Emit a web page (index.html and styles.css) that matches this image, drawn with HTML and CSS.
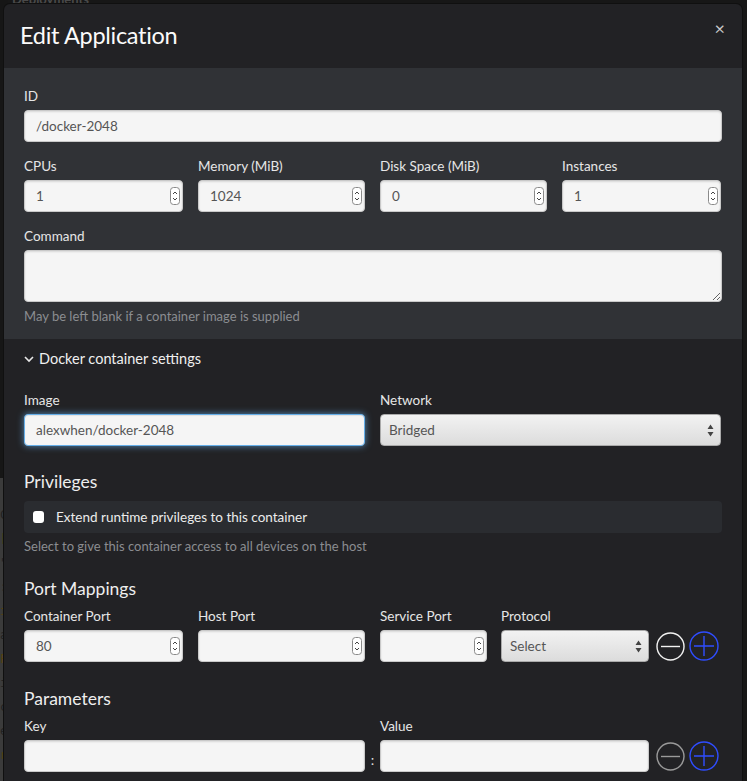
FILE: index.html
```html
<!DOCTYPE html>
<html>
<head>
<meta charset="utf-8">
<title>Edit Application</title>
<link rel="stylesheet" href="styles.css">
</head>
<body>
<div class="page">
  <div class="page-top">Deployments</div>
  <div class="page-side">
    <div class="side-dark"></div>
    <div class="side-light">
      <span class="g1">C</span><span class="g2">[</span><span class="g1">"</span><span class="g1">:</span><span class="g2">i</span><span class="g1">a</span><span class="g2">F</span><span class="g1">i</span><span class="g1">c</span><span class="g1">e</span><span class="g2">r</span>
    </div>
  </div>
</div>

<div class="modal">
  <div class="modal-header">
    <h1 class="modal-title">Edit Application</h1>
    <span class="close">×</span>
  </div>

  <div class="section-main">
    <div class="group">
      <label class="lbl">ID</label>
      <div class="ctl"><span class="val">/docker-2048</span></div>
    </div>

    <div class="row4">
      <div class="group">
        <label class="lbl">CPUs</label>
        <div class="ctl num"><span class="val">1</span><span class="spin"><svg width="10" height="18" viewBox="0 0 10 18"><rect x="0.5" y="0.5" width="9" height="17" rx="3" fill="#fff" stroke="#8a8a8a"/><path d="M3 7 L5 5 L7 7" fill="none" stroke="#444" stroke-width="1"/><path d="M3 11 L5 13 L7 11" fill="none" stroke="#444" stroke-width="1"/></svg></span></div>
      </div>
      <div class="group">
        <label class="lbl">Memory (MiB)</label>
        <div class="ctl num"><span class="val">1024</span><span class="spin"><svg width="10" height="18" viewBox="0 0 10 18"><rect x="0.5" y="0.5" width="9" height="17" rx="3" fill="#fff" stroke="#8a8a8a"/><path d="M3 7 L5 5 L7 7" fill="none" stroke="#444" stroke-width="1"/><path d="M3 11 L5 13 L7 11" fill="none" stroke="#444" stroke-width="1"/></svg></span></div>
      </div>
      <div class="group">
        <label class="lbl">Disk Space (MiB)</label>
        <div class="ctl num"><span class="val">0</span><span class="spin"><svg width="10" height="18" viewBox="0 0 10 18"><rect x="0.5" y="0.5" width="9" height="17" rx="3" fill="#fff" stroke="#8a8a8a"/><path d="M3 7 L5 5 L7 7" fill="none" stroke="#444" stroke-width="1"/><path d="M3 11 L5 13 L7 11" fill="none" stroke="#444" stroke-width="1"/></svg></span></div>
      </div>
      <div class="group">
        <label class="lbl">Instances</label>
        <div class="ctl num"><span class="val">1</span><span class="spin"><svg width="10" height="18" viewBox="0 0 10 18"><rect x="0.5" y="0.5" width="9" height="17" rx="3" fill="#fff" stroke="#8a8a8a"/><path d="M3 7 L5 5 L7 7" fill="none" stroke="#444" stroke-width="1"/><path d="M3 11 L5 13 L7 11" fill="none" stroke="#444" stroke-width="1"/></svg></span></div>
      </div>
    </div>

    <div class="group last">
      <label class="lbl">Command</label>
      <textarea class="ctl area"></textarea>
      <p class="help">May be left blank if a container image is supplied</p>
    </div>
  </div>

  <div class="collapse-head">
    <svg class="chev" width="10" height="8" viewBox="0 0 10 8"><path d="M1 2 L5 6 L9 2" fill="none" stroke="#e8e8e8" stroke-width="1.6"/></svg>
    <span>Docker container settings</span>
  </div>

  <div class="section-docker">
    <div class="row2">
      <div class="group">
        <label class="lbl">Image</label>
        <div class="ctl focus"><span class="val">alexwhen/docker-2048</span></div>
      </div>
      <div class="group">
        <label class="lbl">Network</label>
        <div class="ctl sel"><span class="val">Bridged</span><svg class="arrows" width="7" height="13" viewBox="0 0 7 13"><path d="M3.5 0.5 L6.5 5 H0.5 Z M3.5 12.5 L6.5 8 H0.5 Z" fill="#444"/></svg></div>
      </div>
    </div>

    <h3 class="sub">Privileges</h3>
    <div class="checkbox-box">
      <span class="cb"></span>
      <span class="cb-text">Extend runtime privileges to this container</span>
    </div>
    <p class="help help-priv">Select to give this container access to all devices on the host</p>

    <h3 class="sub sub-ports">Port Mappings</h3>
    <div class="row-ports">
      <div class="group w159">
        <label class="lbl">Container Port</label>
        <div class="ctl num"><span class="val">80</span><span class="spin"><svg width="10" height="18" viewBox="0 0 10 18"><rect x="0.5" y="0.5" width="9" height="17" rx="3" fill="#fff" stroke="#8a8a8a"/><path d="M3 7 L5 5 L7 7" fill="none" stroke="#444" stroke-width="1"/><path d="M3 11 L5 13 L7 11" fill="none" stroke="#444" stroke-width="1"/></svg></span></div>
      </div>
      <div class="group w167">
        <label class="lbl">Host Port</label>
        <div class="ctl num"><span class="val"></span><span class="spin"><svg width="10" height="18" viewBox="0 0 10 18"><rect x="0.5" y="0.5" width="9" height="17" rx="3" fill="#fff" stroke="#8a8a8a"/><path d="M3 7 L5 5 L7 7" fill="none" stroke="#444" stroke-width="1"/><path d="M3 11 L5 13 L7 11" fill="none" stroke="#444" stroke-width="1"/></svg></span></div>
      </div>
      <div class="group w107">
        <label class="lbl">Service Port</label>
        <div class="ctl num"><span class="val"></span><span class="spin"><svg width="10" height="18" viewBox="0 0 10 18"><rect x="0.5" y="0.5" width="9" height="17" rx="3" fill="#fff" stroke="#8a8a8a"/><path d="M3 7 L5 5 L7 7" fill="none" stroke="#444" stroke-width="1"/><path d="M3 11 L5 13 L7 11" fill="none" stroke="#444" stroke-width="1"/></svg></span></div>
      </div>
      <div class="group w148">
        <label class="lbl">Protocol</label>
        <div class="ctl sel"><span class="val">Select</span><svg class="arrows" width="7" height="13" viewBox="0 0 7 13"><path d="M3.5 0.5 L6.5 5 H0.5 Z M3.5 12.5 L6.5 8 H0.5 Z" fill="#444"/></svg></div>
      </div>
      <div class="btns">
        <svg width="29" height="29" viewBox="0 0 29 29"><circle cx="14.5" cy="14.5" r="13.5" fill="none" stroke="#f2f2f2" stroke-width="1.4"/><path d="M5 14.5 H24" stroke="#f2f2f2" stroke-width="1.4"/></svg>
        <svg width="30" height="30" viewBox="0 0 30 30"><circle cx="15" cy="15" r="14" fill="none" stroke="#2f4dff" stroke-width="1.4"/><path d="M5 15 H25 M15 5 V25" stroke="#2f4dff" stroke-width="1.4"/></svg>
      </div>
    </div>

    <h3 class="sub sub-params">Parameters</h3>
    <div class="row-params">
      <div class="group w341">
        <label class="lbl">Key</label>
        <div class="ctl"><span class="val"></span></div>
      </div>
      <span class="colon">:</span>
      <div class="group w269">
        <label class="lbl">Value</label>
        <div class="ctl"><span class="val"></span></div>
      </div>
      <div class="btns">
        <svg width="29" height="29" viewBox="0 0 29 29"><circle cx="14.5" cy="14.5" r="13.5" fill="none" stroke="#9a9a9a" stroke-width="1.4"/><path d="M5 14.5 H24" stroke="#9a9a9a" stroke-width="1.4"/></svg>
        <svg width="30" height="30" viewBox="0 0 30 30"><circle cx="15" cy="15" r="14" fill="none" stroke="#2f4dff" stroke-width="1.4"/><path d="M5 15 H25 M15 5 V25" stroke="#2f4dff" stroke-width="1.4"/></svg>
      </div>
    </div>
  </div>
</div>
</body>
</html>
```

FILE: styles.css
```css
html, body {
  margin: 0;
  padding: 0;
  height: 781px;
  overflow: hidden;
  background: #171717;
  font-family: Lato, "Open Sans", sans-serif;
}

.page {
  position: relative;
  height: 781px;
}

.page-top {
  position: absolute;
  left: 12px;
  top: -9px;
  font-size: 13px;
  font-weight: 700;
  color: #4a4a4a;
}

.page-side {
  width: 8px;
  height: 781px;
  display: flex;
  flex-direction: column;
}

.side-dark {
  height: 478px;
  background: #161616;
}

.side-light {
  flex: 1;
  background: #3b3b3b;
  display: flex;
  flex-direction: column;
  font-family: "DejaVu Sans Mono", monospace;
  font-size: 12px;
  line-height: 14px;
  padding-top: 30px;
  gap: 10px;
}

.g1 { color: #222; }
.g2 { color: #5a4310; }

.modal {
  position: absolute;
  left: 4px;
  top: 4px;
  width: 738px;
  height: 800px;
  background: #222225;
  border-radius: 6px 6px 0 0;
  overflow: hidden;
  box-shadow: 0 0 0 1px #101010;
}

.modal-header {
  height: 64px;
  display: flex;
  align-items: center;
  justify-content: space-between;
  padding: 0 16px 2px 16px;
  box-sizing: border-box;
}

.modal-title {
  margin: 0;
  font-family: Lato, sans-serif;
  font-weight: 400;
  font-size: 23.5px;
  color: #fbfbfb;
  letter-spacing: -0.3px;
}

.close {
  align-self: flex-start;
  margin-top: 14px;
  margin-right: 1px;
  font-size: 18px;
  color: #c8c8c8;
  line-height: 20px;
}

.section-main {
  background: #303236;
  padding: 18px 20px 13px;
}

.group {
  display: flex;
  flex-direction: column;
  margin-bottom: 14px;
}

.group.last { margin-bottom: 0; }

.lbl {
  font-size: 13.5px;
  line-height: 20px;
  height: 20px;
  color: #e6e6e6;
  margin-bottom: 4px;
  white-space: nowrap;
}

.ctl {
  box-sizing: border-box;
  height: 32px;
  background: #f5f5f5;
  border: 1px solid #c9c9c9;
  border-radius: 4px;
  box-shadow: inset 0 1px 2px rgba(0, 0, 0, 0.12);
  display: flex;
  align-items: center;
  justify-content: space-between;
  padding: 0 2px 0 11px;
  font-size: 13.5px;
  color: #555;
}

.val { white-space: nowrap; }

.num { padding-right: 2px; }

.spin {
  display: flex;
  align-items: center;
  height: 18px;
}

.spin svg { display: block; }

.row4 {
  display: grid;
  grid-template-columns: 159px 167px 167px 159px;
  column-gap: 15px;
}

.area {
  height: 52px;
  width: 100%;
  resize: vertical;
  font-family: inherit;
  display: block;
}

.help {
  margin: 4px 0 0;
  font-size: 13px;
  line-height: 20px;
  color: #8b8d91;
}

.help-priv { margin-top: 3px; }

.collapse-head {
  display: flex;
  align-items: center;
  gap: 5px;
  padding: 9px 20px;
  height: 21px;
  font-size: 14.5px;
  color: #f0f0f0;
}

.chev { display: block; }

.section-docker {
  padding: 12px 20px 0;
}

.row2 {
  display: grid;
  grid-template-columns: 341px 341px;
  column-gap: 15px;
}

.row2 .group { margin-bottom: 0; }

.focus {
  border-color: #66afe9;
  box-shadow: inset 0 1px 1px rgba(0, 0, 0, 0.08), 0 0 7px rgba(102, 175, 233, 0.75);
}

.sel {
  background: linear-gradient(#f2f2f2, #dcdcdc);
  padding: 0 6px 0 8px;
  color: #555;
  box-shadow: none;
  border-color: #aaa;
}

.arrows { display: block; }

.sub {
  margin: 24px 0 0;
  font-size: 17.5px;
  font-weight: 400;
  line-height: 24px;
  color: #eeeeee;
}

.checkbox-box {
  margin-top: 7px;
  height: 32px;
  background: #2a2c30;
  border-radius: 4px;
  display: flex;
  align-items: center;
  padding-left: 9px;
  gap: 12px;
}

.cb {
  width: 11px;
  height: 12px;
  background: #fff;
  border-radius: 3px;
}

.cb-text {
  font-size: 13.5px;
  color: #ececec;
}

.help + .sub { margin-top: 21px; }

.sub.sub-params { margin-top: 25px; }

.row-ports,
.row-params {
  margin-top: 5px;
  display: flex;
  align-items: flex-end;
}

.row-ports .group,
.row-params .group { margin-bottom: 0; }

.w159 { width: 159px; margin-right: 15px; }
.w167 { width: 167px; margin-right: 15px; }
.w107 { width: 107px; margin-right: 14px; }
.w148 { width: 148px; margin-right: 7px; }
.w341 { width: 341px; }
.w269 { width: 269px; margin-right: 7px; }

.btns {
  display: flex;
  align-items: center;
  gap: 4px;
  height: 32px;
}

.btns svg { display: block; }

.colon {
  width: 15px;
  text-align: center;
  color: #ddd;
  font-size: 14px;
  line-height: 20px;
  padding-bottom: 2px;
}
```
